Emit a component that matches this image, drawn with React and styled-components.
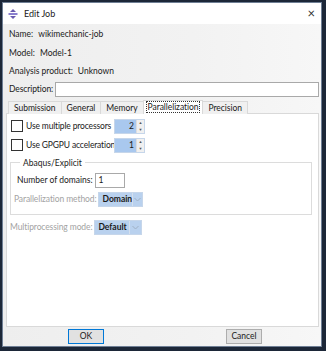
import styled, { createGlobalStyle } from "styled-components";

const Global = createGlobalStyle`
  html, body { margin: 0; padding: 0; }
  body {
    background: #1c2738;
    font-family: Lato, "Noto Sans", sans-serif;
    font-size: 8.5px;
    color: #1a1a1a;
  }
`;

const Screen = styled.div`
  width: 326px;
  height: 351px;
  padding: 2px 4px 4px 2px;
  box-sizing: border-box;
`;

const Window = styled.div`
  width: 320px;
  height: 345px;
  border: 1px solid #6f7f95;
  box-sizing: border-box;
  display: flex;
  flex-direction: column;
  background: linear-gradient(90deg, #eeeeee 0%, #f2f2f2 60%, #f7f7f7 100%);
`;

const TitleBar = styled.div`
  height: 21px;
  background: #fff;
  display: flex;
  align-items: center;
  padding: 0 6px 0 5px;
  gap: 6px;
  font-size: 9px;
`;

const TitleText = styled.div`
  flex: 1;
`;

const Close = styled.div`
  font-size: 13px;
  color: #333;
  line-height: 1;
`;

const Body = styled.div`
  flex: 1;
  display: flex;
  flex-direction: column;
  padding: 1px 2px 0 3px;
  white-space: nowrap;
`;

const InfoRow = styled.div`
  height: 18.5px;
  display: flex;
  align-items: center;
  padding-left: 3px;
  gap: 5px;
`;

const DescRow = styled.div`
  display: flex;
  align-items: center;
  gap: 2px;
  padding-left: 3px;
  margin-top: 1px;
  letter-spacing: -0.1px;
`;

const TextInput = styled.div`
  height: 15px;
  border: 1px solid #a9a9a9;
  background: #fff;
  box-sizing: border-box;
  flex: ${(p) => (p.$grow ? 1 : "none")};
  width: ${(p) => (p.$w ? p.$w + "px" : "auto")};
  padding-left: 3px;
  display: flex;
  align-items: center;
`;

const Tabs = styled.div`
  display: flex;
  align-items: flex-end;
  padding-left: 3px;
  margin-top: 3px;
  height: 14px;
`;

const Tab = styled.div`
  height: ${(p) => (p.$active ? 14 : 13)}px;
  box-sizing: border-box;
  padding: 0 ${(p) => (p.$active ? 3 : 5)}px;
  display: flex;
  align-items: center;
  border: 1px solid #d9d9d9;
  border-bottom: none;
  margin-left: -1px;
  letter-spacing: -0.05px;
  background: ${(p) => (p.$active ? "#fff" : "#f0f0f0")};
  position: relative;
  z-index: ${(p) => (p.$active ? 2 : 1)};
`;

const Focus = styled.span`
  outline: 1px dotted #333;
  outline-offset: 0px;
  padding: 0 1px;
`;

const Panel = styled.div`
  height: 209px;
  background: #fff;
  border: 1px solid #d9d9d9;
  margin-top: -1px;
  display: flex;
  flex-direction: column;
  padding: 3px 4px 0 3px;
`;

const CheckRow = styled.div`
  display: flex;
  align-items: center;
  height: 19px;
  padding-left: 1px;
`;

const Box = styled.div`
  width: 10px;
  height: 10px;
  border: 1px solid #333;
  background: #fff;
  margin-right: 3px;
  flex-shrink: 0;
`;

const CheckLabel = styled.div`
  width: ${(p) => p.$w}px;
  flex-shrink: 0;
  letter-spacing: -0.15px;
`;

const Spin = styled.div`
  width: 31px;
  height: 15px;
  display: flex;
  border: 1px solid #c6d6ea;
  box-sizing: border-box;
  background: #a9c8ee;
`;

const SpinValue = styled.div`
  flex: 1;
  text-align: right;
  padding-right: 2px;
  line-height: 13px;
`;

const SpinArrows = styled.div`
  width: 7px;
  background: #f0f0f0;
  display: flex;
  flex-direction: column;
  align-items: center;
  justify-content: space-around;
  font-size: 4px;
  color: #555;
  border-left: 1px solid #ddd;
`;

const Group = styled.fieldset`
  margin: 3px 2px 0 0;
  border: 1px solid #dcdcdc;
  padding: 4px 0 6px 6px;
  display: flex;
  flex-direction: column;
  gap: 2px;
`;

const Legend = styled.legend`
  padding: 0 3px;
  margin-left: 3px;
`;

const FieldRow = styled.div`
  display: flex;
  align-items: center;
  height: 17px;
  gap: 2px;
  color: ${(p) => (p.$dim ? "#a3a3a3" : "#1a1a1a")};
  letter-spacing: ${(p) => (p.$dim ? "-0.1px" : "0")};
  margin-left: ${(p) => p.$ml || 0}px;
  margin-top: ${(p) => p.$mt || 0}px;
`;

const Combo = styled.div`
  height: 15px;
  width: ${(p) => p.$w}px;
  display: flex;
  background: #b9d1ee;
  border: 1px solid #c6d6ea;
  box-sizing: border-box;
  color: #1a1a1a;
  font-weight: 700;
  letter-spacing: 0;
`;

const ComboText = styled.div`
  flex: 1;
  padding-left: 3px;
  line-height: 13px;
`;

const ComboArrow = styled.div`
  width: 11px;
  display: flex;
  align-items: center;
  justify-content: center;
  border-left: 1px solid #d3dfee;
`;

const Buttons = styled.div`
  flex: 1;
  display: flex;
  align-items: center;
  padding-left: 62px;
  gap: 122px;
`;

const Button = styled.div`
  width: 36px;
  height: 15px;
  box-sizing: border-box;
  background: #e1e1e1;
  border: 1px solid ${(p) => (p.$default ? "#0078d7" : "#adadad")};
  display: flex;
  align-items: center;
  justify-content: center;
`;

const JobIcon = () => (
  <svg width="10" height="10" viewBox="0 0 10 10">
    <path d="M5 0 L8 3 L2 3 Z" fill="#6a5bb0" />
    <rect x="0.5" y="4" width="9" height="2" fill="#8a7fcf" />
    <path d="M5 10 L8 7 L2 7 Z" fill="#6a5bb0" />
  </svg>
);

const Chevron = () => (
  <svg width="7" height="5" viewBox="0 0 7 5">
    <path d="M0.5 1 L3.5 4 L6.5 1" stroke="#9fb0c4" fill="none" />
  </svg>
);

const App = () => {
  return (
    <Screen>
      <Global />
      <Window>
        <TitleBar>
          <JobIcon />
          <TitleText>Edit Job</TitleText>
          <Close>×</Close>
        </TitleBar>
        <Body>
          <InfoRow>
            <span>Name:</span>
            <span>wikimechanic-job</span>
          </InfoRow>
          <InfoRow>
            <span>Model:</span>
            <span>Model-1</span>
          </InfoRow>
          <InfoRow>
            <span>Analysis product:</span>
            <span>Unknown</span>
          </InfoRow>
          <DescRow>
            <span>Description:</span>
            <TextInput $grow />
          </DescRow>
          <Tabs>
            <Tab>Submission</Tab>
            <Tab>General</Tab>
            <Tab>Memory</Tab>
            <Tab $active>
              <Focus>Parallelization</Focus>
            </Tab>
            <Tab>Precision</Tab>
          </Tabs>
          <Panel>
            <CheckRow>
              <Box />
              <CheckLabel $w={88}>Use multiple processors</CheckLabel>
              <Spin>
                <SpinValue>2</SpinValue>
                <SpinArrows>
                  <span>▲</span>
                  <span>▼</span>
                </SpinArrows>
              </Spin>
            </CheckRow>
            <CheckRow>
              <Box />
              <CheckLabel $w={88}>Use GPGPU acceleration</CheckLabel>
              <Spin>
                <SpinValue>1</SpinValue>
                <SpinArrows>
                  <span>▲</span>
                  <span>▼</span>
                </SpinArrows>
              </Spin>
            </CheckRow>
            <Group>
              <Legend>Abaqus/Explicit</Legend>
              <FieldRow>
                <span>Number of domains:</span>
                <TextInput $w={30}>1</TextInput>
              </FieldRow>
              <FieldRow $dim $ml={-3}>
                <span>Parallelization method:</span>
                <Combo $w={45}>
                  <ComboText>Domain</ComboText>
                  <ComboArrow>
                    <Chevron />
                  </ComboArrow>
                </Combo>
              </FieldRow>
            </Group>
            <FieldRow $dim $mt={4}>
              <span>Multiprocessing mode:</span>
              <Combo $w={48}>
                <ComboText>Default</ComboText>
                <ComboArrow>
                  <Chevron />
                </ComboArrow>
              </Combo>
            </FieldRow>
          </Panel>
          <Buttons>
            <Button $default>OK</Button>
            <Button>Cancel</Button>
          </Buttons>
        </Body>
      </Window>
    </Screen>
  );
};

export default App;
